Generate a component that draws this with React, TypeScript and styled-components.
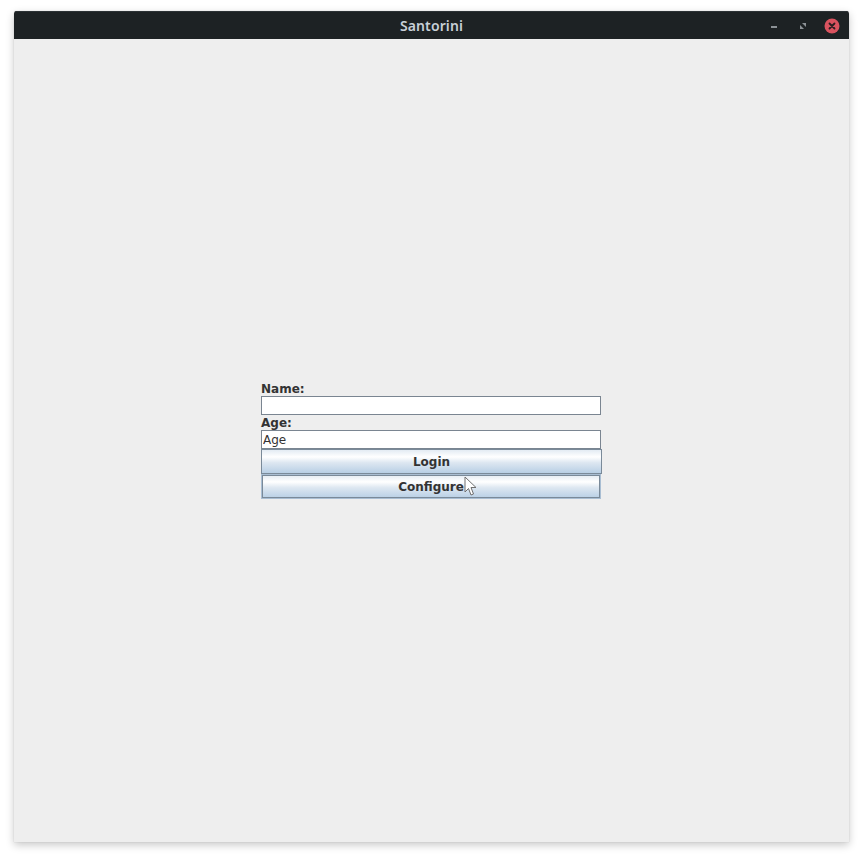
import { createGlobalStyle } from "styled-components";
import styled from "styled-components";

const GlobalStyle = createGlobalStyle`
  html, body {
    margin: 0;
    padding: 0;
    background: #ffffff;
  }
  * {
    box-sizing: border-box;
  }
`;

const Page = styled.div`
  width: 863px;
  height: 859px;
  padding: 11px 14px 17px 14px;
  background: #ffffff;
`;

const Window = styled.div`
  width: 835px;
  height: 831px;
  display: flex;
  flex-direction: column;
  background: #eeeeee;
  box-shadow: 0 3px 9px rgba(0, 0, 0, 0.22), 0 0 1px rgba(0, 0, 0, 0.25);
  border-radius: 3px 3px 0 0;
  overflow: hidden;
`;

const TitleBar = styled.div`
  position: relative;
  height: 28px;
  flex: none;
  display: flex;
  align-items: center;
  justify-content: center;
  background: #1d2224;
  border-top: 1px solid #2c3235;
`;

const Title = styled.div`
  font-family: "Noto Sans", "DejaVu Sans", sans-serif;
  font-weight: 600;
  font-size: 14px;
  color: #c8d0d8;
  letter-spacing: 0.1px;
`;

const Controls = styled.div`
  position: absolute;
  right: 9px;
  top: 0;
  height: 100%;
  display: flex;
  align-items: center;
  gap: 13px;
`;

const CtrlBtn = styled.div`
  width: 16px;
  height: 16px;
  display: flex;
  align-items: center;
  justify-content: center;
`;

const Content = styled.div`
  flex: 1;
  display: flex;
  align-items: center;
  justify-content: center;
  padding-bottom: 1px;
`;

const Form = styled.div`
  width: 341px;
  display: flex;
  flex-direction: column;
  position: relative;
`;

const Label = styled.div`
  font-family: "DejaVu Sans", sans-serif;
  font-weight: 700;
  font-size: 12px;
  line-height: 14px;
  height: 15px;
  padding-top: 1px;
  color: #333333;
`;

const Field = styled.input`
  width: 340px;
  height: 19px;
  margin: 0;
  padding: 0 1px;
  border: 1px solid #7a8591;
  background: #ffffff;
  font-family: "DejaVu Sans", sans-serif;
  font-size: 12px;
  color: #333333;
  outline: none;
`;

const Button = styled.button<{ $focused?: boolean }>`
  width: ${(p) => (p.$focused ? "340px" : "341px")};
  height: 25px;
  margin: 0;
  padding: 0;
  border: 1px solid ${(p) => (p.$focused ? "#a9bed3" : "#7a8a99")};
  background: linear-gradient(
    to bottom,
    #e3ebf3 0%,
    #ffffff 30%,
    #dde7f1 55%,
    #b8cfe5 100%
  );
  font-family: "DejaVu Sans", sans-serif;
  font-weight: 700;
  font-size: 12px;
  color: #333333;
  box-shadow: ${(p) => (p.$focused ? "inset 0 0 0 1px #7a8a99" : "none")};
`;

const Cursor = styled.svg`
  position: absolute;
  left: 203px;
  top: 95px;
  pointer-events: none;
`;

export default function App() {
  return (
    <>
      <GlobalStyle />
      <Page>
        <Window>
          <TitleBar>
            <Title>Santorini</Title>
            <Controls>
              <CtrlBtn>
                <svg width="16" height="16" viewBox="0 0 16 16">
                  <rect x="5" y="8" width="6" height="2" fill="#8c9296" />
                </svg>
              </CtrlBtn>
              <CtrlBtn>
                <svg width="16" height="16" viewBox="0 0 16 16">
                  <path d="M7 5 L11 5 L11 9 Z" fill="#8c9296" />
                  <path d="M5 7 L5 11 L9 11 Z" fill="#8c9296" />
                </svg>
              </CtrlBtn>
              <CtrlBtn>
                <svg width="16" height="16" viewBox="0 0 16 16">
                  <circle cx="8" cy="8" r="7.5" fill="#d9535f" />
                  <path
                    d="M5.5 5.5 L10.5 10.5 M10.5 5.5 L5.5 10.5"
                    stroke="#2a1e20"
                    strokeWidth="1.8"
                    strokeLinecap="round"
                  />
                </svg>
              </CtrlBtn>
            </Controls>
          </TitleBar>
          <Content>
            <Form>
              <Label>Name:</Label>
              <Field type="text" />
              <Label>Age:</Label>
              <Field type="text" defaultValue="Age" />
              <Button>Login</Button>
              <Button $focused>Configure</Button>
              <Cursor width="14" height="22" viewBox="0 0 14 22">
                <path
                  d="M1 1 L1 16 L4.5 12.5 L7 19 L9.5 18 L7 11.5 L12 11.5 Z"
                  fill="#ffffff"
                  stroke="#6f6f6f"
                  strokeWidth="1"
                  strokeLinejoin="round"
                />
              </Cursor>
            </Form>
          </Content>
        </Window>
      </Page>
    </>
  );
}
